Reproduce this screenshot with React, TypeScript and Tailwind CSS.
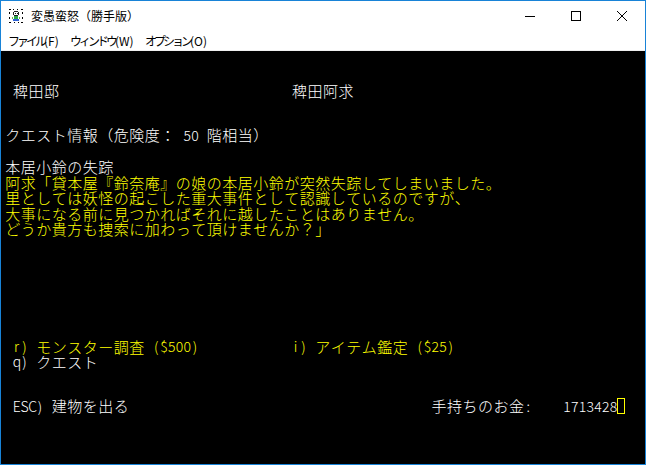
import React from 'react'

const isWide = (ch: string) => {
  const c = ch.codePointAt(0) ?? 0
  return c > 0xff && !(c >= 0xff61 && c <= 0xff9f)
}

// one terminal cell per character: half width 7.75px, full width 15.5px
function Cells({ text, color = 'text-white' }: { text: string; color?: string }) {
  return (
    <>
      {Array.from(text).map((ch, i) =>
        isWide(ch) ? (
          <span key={i} className={`inline-block w-[15.5px] shrink-0 text-center ${color}`}>{ch}</span>
        ) : (
          <span key={i} className={`inline-block w-[7.75px] shrink-0 text-center text-[14px] ${color}`}>
            {ch === ' ' ? '\u00a0' : ch}
          </span>
        )
      )}
    </>
  )
}

function Row({ children, className = 'h-[16px] leading-[16px]' }: { children: React.ReactNode; className?: string }) {
  return <div className={`flex items-center whitespace-pre ${className}`}>{children}</div>
}

function AppIcon() {
  return (
    <svg width="16" height="16" viewBox="0 0 16 16" shapeRendering="crispEdges">
      <rect x="0" y="0" width="16" height="16" fill="#fff" />
      <path d="M1 1h2v1H1zM5 1h1v1H5zM9 1h1v1H9zM13 1h2v1h-2zM1 4h1v2H1zM14 4h1v2h-1zM1 9h1v2H1zM14 9h1v2h-1zM1 14h2v1H1zM6 14h1v1H6zM10 14h1v1h-1zM13 14h2v1h-2z" fill="#000" />
      <path d="M6 3h4v1H6zM5 4h1v3H5zM10 4h1v3h-1zM6 7h4v1H6zM7 5h1v1H7zM9 5h1v1H9z" fill="#222" />
      <path d="M6 8h4v3H6z" fill="#2aa84a" />
      <path d="M5 11h6v2H5z" fill="#2f62d6" />
      <path d="M4 9h1v2H4zM11 9h1v2h-1z" fill="#6b4" />
    </svg>
  )
}

export default function App() {
  return (
    <div className="w-[646px] h-[465px] border border-[#1883d7] bg-white flex flex-col overflow-hidden font-['Noto_Sans_CJK_JP',sans-serif]">
      {/* title bar */}
      <div className="h-[30px] flex items-center shrink-0">
        <div className="pl-[7px] pr-[7px] flex items-center">
          <AppIcon />
        </div>
        <span className="text-[12px] text-black leading-none">変愚蛮怒（勝手版）</span>
        <div className="ml-auto flex h-full">
          <div className="w-[46px] flex items-center justify-center">
            <div className="w-[10px] h-px bg-black" />
          </div>
          <div className="w-[46px] flex items-center justify-center">
            <div className="w-[10px] h-[10px] border border-black" />
          </div>
          <div className="w-[46px] flex items-center justify-center">
            <svg width="10" height="10" viewBox="0 0 10 10">
              <path d="M0 0L10 10M10 0L0 10" stroke="#000" strokeWidth="1" />
            </svg>
          </div>
        </div>
      </div>

      {/* menu bar */}
      <div className="h-[19px] flex items-center text-[12px] text-black leading-none shrink-0">
        <span className="ml-[7px] w-[62px]"><span className="tracking-[-3px]">ファイル</span>(F)</span>
        <span className="w-[75px]"><span className="tracking-[-3px]">ウィンドウ</span>(W)</span>
        <span><span className="tracking-[-3px]">オプション</span>(O)</span>
      </div>
      <div className="h-px bg-[#f0f0f0] shrink-0" />

      {/* terminal */}
      <div className="flex-1 bg-black pl-[4px] text-[15px] font-light flex flex-col">
        <Row className="mt-[32px] h-[16px] leading-[16px]">
          <Cells text={' 稗田邸' + ' '.repeat(30) + '稗田阿求'} />
        </Row>
        <Row className="mt-[28px] h-[16px] leading-[16px]">
          <Cells text="クエスト情報（危険度： 50 階相当）" />
        </Row>
        <Row className="mt-[16px] h-[15.5px] leading-[15.5px]">
          <Cells text="本居小鈴の失踪" />
        </Row>
        <Row className="h-[15.5px] leading-[15.5px]">
          <Cells color="text-[#ffff00]" text="阿求「貸本屋『鈴奈庵』の娘の本居小鈴が突然失踪してしまいました。" />
        </Row>
        <Row className="h-[15.5px] leading-[15.5px]">
          <Cells color="text-[#ffff00]" text="里としては妖怪の起こした重大事件として認識しているのですが、" />
        </Row>
        <Row className="h-[15.5px] leading-[15.5px]">
          <Cells color="text-[#ffff00]" text="大事になる前に見つかればそれに越したことはありません。" />
        </Row>
        <Row className="h-[15.5px] leading-[15.5px]">
          <Cells color="text-[#ffff00]" text="どうか貴方も捜索に加わって頂けませんか？」" />
        </Row>

        <Row className="mt-[102px] h-[15.5px] leading-[15.5px]">
          <Cells color="text-[#ffff00]" text={' r) モンスター調査 ($500)' + ' '.repeat(12) + 'i) アイテム鑑定 ($25)'} />
        </Row>
        <Row className="h-[15.5px] leading-[15.5px]">
          <Cells text=" q) クエスト" />
        </Row>

        <Row className="mt-[28px] h-[16px] leading-[16px]">
          <Cells text={' ESC) 建物を出る' + ' '.repeat(39) + '手持ちのお金:' + ' '.repeat(4) + '1713428'} />
          <span className="inline-block w-[8px] h-[16px] border border-[#ffff00] shrink-0" />
        </Row>
      </div>
    </div>
  )
}
